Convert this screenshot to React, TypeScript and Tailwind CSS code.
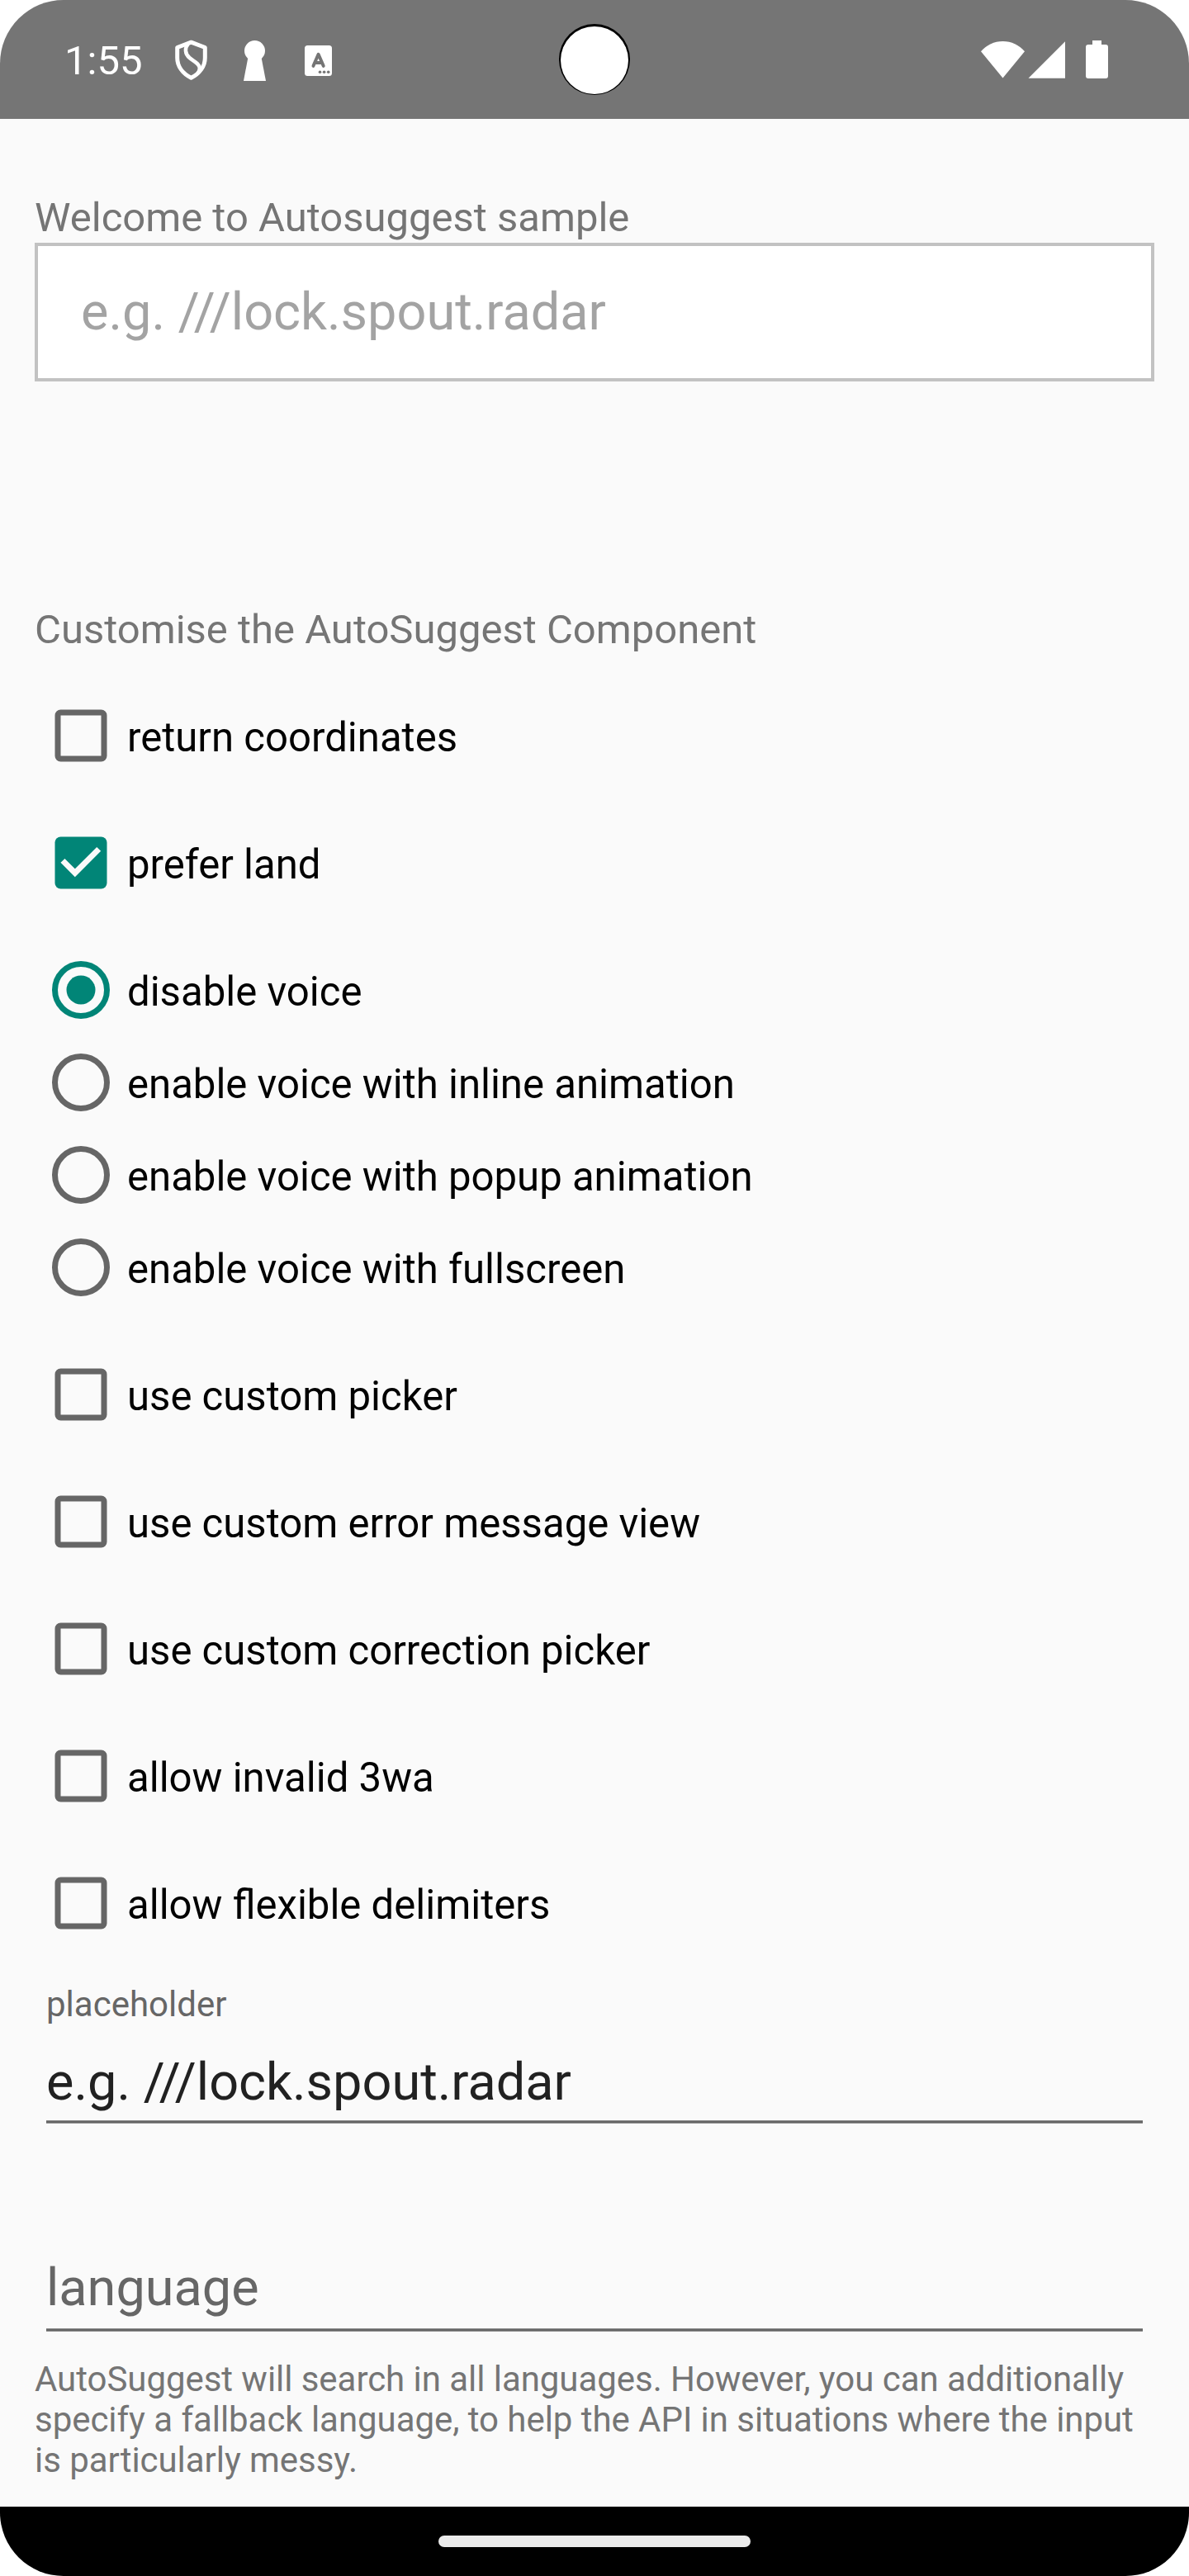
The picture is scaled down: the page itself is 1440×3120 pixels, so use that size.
import type { ReactNode } from "react";

function ShieldIcon() {
  return (
    <svg className="h-[50px] w-[42px]" viewBox="0 0 42 50" fill="none" stroke="#fff" strokeWidth="5" strokeLinejoin="round">
      <path d="M20.500 3.200 37.300 9.500V22C37.300 32 31 41 20.500 46.300 10 41 3.700 32 3.700 22V9.500Z" />
      <path d="M17 5C12.500 10 12.800 17 18.500 22 23 26 30.500 28.500 30.800 34.500 30.900 37.500 29.500 39.500 28.500 41" strokeWidth="4.500" />
    </svg>
  );
}

function KeyholeIcon() {
  return (
    <svg className="h-[49px] w-[27px]" viewBox="0 0 27 49" fill="#fff">
      <circle cx="13.5" cy="12.500" r="12.500" />
      <path d="M5.500 20H21.400L27 49H0Z" />
    </svg>
  );
}

function LetterCardIcon() {
  return (
    <svg className="h-[37px] w-[33px]" viewBox="0 0 33 37">
      <rect width="33" height="37" rx="3.5" fill="#fff" />
      <path d="M10.500 24.800 16.600 10.800 22.700 24.800M12.500 21H20.700" fill="none" stroke="#757575" strokeWidth="4" strokeLinecap="round" strokeLinejoin="round" />
      <g fill="#757575">
        <circle cx="18.500" cy="32.300" r="1.8" />
        <circle cx="23.600" cy="32.300" r="1.8" />
        <circle cx="28.700" cy="32.300" r="1.8" />
      </g>
    </svg>
  );
}

function StatusBar() {
  return (
    <header className="relative flex h-36 items-start bg-[#757575] text-white">
      <span className="mt-[45px] ml-[78px] w-[133px] text-[49px] leading-[58px]">1:55</span>
      <div className="mt-[48px]"><ShieldIcon /></div>
      <div className="mt-[49px] ml-[42px]"><KeyholeIcon /></div>
      <div className="mt-[55px] ml-[47px]"><LetterCardIcon /></div>
      <div className="mt-[49px] mr-[98px] ml-auto flex">
        <svg className="h-[46px] w-[54px]" viewBox="0 0 54 46" fill="#fff">
          <path d="M0 13.300C7 5.500 16 1 26.500 1S46 5.500 53 13.300L26.500 45.500Z" />
        </svg>
        <svg className="ml-[3px] h-[46px] w-[45px]" viewBox="0 0 45 46" fill="#fff">
          <path d="M.5 45.700 45 1.200V45.700Z" />
        </svg>
        <svg className="ml-[25px] h-[46px] w-[27px]" viewBox="0 0 27 46" fill="#fff">
          <path d="M8 0H19V5H24A3 3 0 0 1 27 8V43A3 3 0 0 1 24 46H3A3 3 0 0 1 0 43V8A3 3 0 0 1 3 5H8Z" />
        </svg>
      </div>
      <div className="absolute top-[29px] left-[677px] flex h-[86px] w-[86px] justify-center rounded-full bg-black pt-[3px]">
        <div className="h-[82px] w-[82px] rounded-full bg-white" />
      </div>
    </header>
  );
}

function CheckboxIcon({ checked }: { checked?: boolean }) {
  return (
    <svg className="size-[112px] shrink-0" viewBox="0 0 32 32">
      {checked ? (
        <>
          <rect x="7" y="7" width="18" height="18" rx="2" fill="#018577" />
          <path d="M9.700 15.250 13.950 19.500 22.200 11.250" fill="none" stroke="#fafafa" strokeWidth="2" />
        </>
      ) : (
        <rect x="8" y="8" width="16" height="16" rx="1" fill="none" stroke="#666" strokeWidth="2" />
      )}
    </svg>
  );
}

function RadioIcon({ checked }: { checked?: boolean }) {
  return (
    <svg className="size-[112px] shrink-0" viewBox="0 0 32 32">
      <circle cx="16" cy="16" r="9" fill="none" stroke={checked ? "#018577" : "#666"} strokeWidth="2" />
      {checked && <circle cx="16" cy="16" r="5" fill="#018577" />}
    </svg>
  );
}

function Option({ icon, children }: { icon: ReactNode; children: ReactNode }) {
  return (
    <label className="flex h-[112px] items-center text-[49.1px] leading-[58px] text-black">
      {icon}
      <span className="pt-[4px]">{children}</span>
    </label>
  );
}

function Underline() {
  return <div className="h-1 border-y border-[#8c8c8c] bg-[#666]" />;
}

const pickers = [
  "use custom picker",
  "use custom error message view",
  "use custom correction picker",
  "allow invalid 3wa",
  "allow flexible delimiters",
];

export default function App() {
  return (
    <div className="h-[3120px] w-[1440px] bg-white font-['Roboto',sans-serif]">
      <div className="flex h-full flex-col overflow-hidden rounded-[77px] bg-[#fafafa]">
        <StatusBar />
        <main className="flex-1 px-[42px] pt-[91px] text-[#757575]">
          <h1 className="h-[59px] text-[49px] leading-[58px]">Welcome to Autosuggest sample</h1>
          <div className="flex h-[168px] items-center border-4 border-[#c2c2c2] bg-white pl-[52px] text-[63px] leading-[74px] text-[#a3a3a3]">
            e.g. ///lock.spout.radar
          </div>
          <h2 className="mt-[272px] text-[49px] leading-[58px]">Customise the AutoSuggest Component</h2>
          <div className="mt-[43px] flex flex-col gap-[42px]">
            <Option icon={<CheckboxIcon />}>return coordinates</Option>
            <Option icon={<CheckboxIcon checked />}>prefer land</Option>
            <div>
              <Option icon={<RadioIcon checked />}>disable voice</Option>
              <Option icon={<RadioIcon />}>enable voice with inline animation</Option>
              <Option icon={<RadioIcon />}>enable voice with popup animation</Option>
              <Option icon={<RadioIcon />}>enable voice with fullscreen</Option>
            </div>
            {pickers.map((label) => (
              <Option key={label} icon={<CheckboxIcon />}>{label}</Option>
            ))}
          </div>
          <div className="mx-[14px] mt-[42px] text-[#666]">
            <div className="text-[42px] leading-[49px]">placeholder</div>
            <div className="mt-[33px] mb-[9px] text-[63px] leading-[74px] text-[#212121]">e.g. ///lock.spout.radar</div>
            <Underline />
          </div>
          <div className="mx-[14px] mt-[162px] text-[#666]">
            <div className="mb-[12px] text-[63px] leading-[74px]">language</div>
            <Underline />
          </div>
          <p className="mt-[33px] text-[42px] leading-[49px] tracking-[-0.05px]">
            AutoSuggest will search in all languages. However, you can additionally
            <br />
            specify a fallback language, to help the API in situations where the input
            <br />
            is particularly messy.
          </p>
        </main>
        <footer className="flex h-[84px] justify-center bg-black pt-[35px]">
          <div className="h-[14px] w-[378px] rounded-[7px] bg-[#ebebeb]" />
        </footer>
      </div>
    </div>
  );
}
